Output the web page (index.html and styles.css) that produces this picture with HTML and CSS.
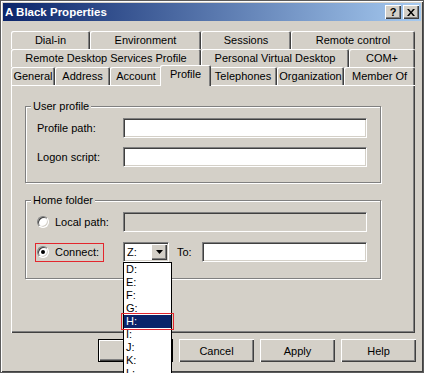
FILE: index.html
```html
<!DOCTYPE html>
<html lang="en">
<head>
    <meta charset="UTF-8">
    <title>A Black Properties</title>
    <link rel="stylesheet" href="styles.css">
</head>
<body>

    <div class="window">
        <div class="titlebar">
            <span class="title">A Black Properties</span>
            <div class="tb-buttons">
                <span class="tb-btn">?</span>
                <span class="tb-btn">
                    <svg width="8" height="7" viewBox="0 0 8 7"><path d="M0 0h2l2 2.5L6 0h2L5 3.5 8 7H6L4 4.5 2 7H0l3-3.5z"/></svg>
                </span>
            </div>
        </div>

        <div class="client">
            <!-- Tab strip, back rows first -->
            <div class="tabs">
                <div class="tab-row">
                    <div class="tab w-dialin">Dial-in</div>
                    <div class="tab w-env">Environment</div>
                    <div class="tab w-sessions">Sessions</div>
                    <div class="tab w-remote">Remote control</div>
                </div>
                <div class="tab-row">
                    <div class="tab w-rdsp">Remote Desktop Services Profile</div>
                    <div class="tab w-pvd">Personal Virtual Desktop</div>
                    <div class="tab w-com">COM+</div>
                </div>
                <div class="tab-row">
                    <div class="tab w-general">General</div>
                    <div class="tab w-address">Address</div>
                    <div class="tab w-account">Account</div>
                    <div class="tab w-profile active">Profile</div>
                    <div class="tab w-phones">Telephones</div>
                    <div class="tab w-org">Organization</div>
                    <div class="tab w-member">Member Of</div>
                </div>
            </div>

            <div class="panel">
                <div class="group">
                    <span class="group-label">User profile</span>
                    <div class="row">
                        <span class="label">Profile path:</span>
                        <div class="field"></div>
                    </div>
                    <div class="row">
                        <span class="label">Logon script:</span>
                        <div class="field"></div>
                    </div>
                </div>

                <div class="group home">
                    <span class="group-label">Home folder</span>
                    <div class="row">
                        <div class="label radio-label">
                            <span class="radio"></span>
                            <span>Local path:</span>
                        </div>
                        <div class="field disabled"></div>
                    </div>
                    <div class="row">
                        <div class="label">
                            <div class="focus-box">
                                <span class="radio checked"></span>
                                <span>Connect:</span>
                            </div>
                        </div>
                        <div class="combo">
                            <span class="combo-text">Z:</span>
                            <span class="drop-btn">
                                <svg width="7" height="4" viewBox="0 0 7 4"><path d="M0 0H7L3.5 4Z"/></svg>
                            </span>
                            <div class="drop-list">
                                <div class="opt">D:</div>
                                <div class="opt">E:</div>
                                <div class="opt">F:</div>
                                <div class="opt">G:</div>
                                <div class="opt sel">H:</div>
                                <div class="opt">I:</div>
                                <div class="opt">J:</div>
                                <div class="opt">K:</div>
                                <div class="opt">L:</div>
                            </div>
                        </div>
                        <span class="to-label">To:</span>
                        <div class="field to-field"></div>
                    </div>
                </div>
            </div>

            <div class="buttons">
                <div class="btn default">OK</div>
                <div class="btn">Cancel</div>
                <div class="btn">Apply</div>
                <div class="btn">Help</div>
            </div>
        </div>
    </div>

</body>
</html>
```

FILE: styles.css
```css
/* General */
body {
    margin: 0;
    overflow: hidden;
    font-family: "Liberation Sans", Arial, sans-serif;
    font-size: 11px;
    color: #000;
}

.window {
    width: 424px;
    height: 373px;
    box-sizing: border-box;
    border: 1px solid #5b5b5b;
    padding: 2px;
    background: #d4d0c8;
    box-shadow: inset 1px 1px #fff, inset -1px -1px #404040;
    display: flex;
    flex-direction: column;
}

/* Title bar */
.titlebar {
    height: 18px;
    padding: 0 2px;
    display: flex;
    align-items: center;
    justify-content: space-between;
    background: linear-gradient(to right, #0a246a, #a6caf0);
}

.title {
    color: #fff;
    font-weight: bold;
    font-size: 11.5px;
}

.tb-buttons {
    display: flex;
    gap: 2px;
}

.tb-btn {
    width: 16px;
    height: 14px;
    box-sizing: border-box;
    background: #d4d0c8;
    box-shadow: inset 1px 1px #fff, inset -1px -1px #404040, inset -2px -2px #808080;
    display: flex;
    align-items: center;
    justify-content: center;
    font-weight: bold;
    font-size: 11px;
}

/* Client area */
.client {
    flex: 1;
    padding: 10px 0 0 8px;
}

.tabs {
    width: 404px;
}

.tab-row {
    display: flex;
    align-items: flex-start;
    height: 18px;
}

.tab {
    height: 18px;
    box-sizing: border-box;
    padding-bottom: 1px;
    border-radius: 2px 2px 0 0;
    background: #d4d0c8;
    box-shadow: inset 1px 1px #fff, inset -1px 0 #404040, inset -2px 0 #808080;
    display: flex;
    align-items: center;
    justify-content: center;
    white-space: nowrap;
}

.tab.active {
    height: 21px;
    margin: -2px -2px 0 -2px;
    padding-bottom: 3px;
    position: relative;
    z-index: 1;
}

.w-dialin { width: 79px; }
.w-env { width: 111px; }
.w-sessions { width: 90px; }
.w-remote { width: 124px; }
.w-rdsp { width: 190px; }
.w-pvd { width: 148px; }
.w-com { width: 66px; }
.w-general { width: 44px; }
.w-address { width: 55px; }
.w-account { width: 52px; }
.w-profile { width: 51px; }
.w-phones { width: 68px; }
.w-org { width: 67px; }
.w-member { width: 71px; }

.panel {
    width: 404px;
    height: 248px;
    box-sizing: border-box;
    padding: 21px 0 0 14px;
    box-shadow: inset 1px 1px #fff, inset -1px -1px #404040, inset -2px -2px #808080;
}

/* Group boxes */
.group {
    position: relative;
    width: 356px;
    box-sizing: border-box;
    border: 1px solid #808080;
    box-shadow: inset 1px 1px #fff, 1px 1px #fff;
    padding: 11px 0 15px 11px;
    display: flex;
    flex-direction: column;
    gap: 9px;
}

.group.home {
    margin-top: 17px;
    padding-bottom: 16px;
    gap: 10px;
}

.group-label {
    position: absolute;
    top: -7px;
    left: 5px;
    padding: 0 2px;
    line-height: 13px;
    background: #d4d0c8;
}

.row {
    height: 20px;
    display: flex;
    align-items: center;
}

.label {
    width: 86px;
    flex-shrink: 0;
}

.radio-label {
    display: flex;
    align-items: center;
}

.field {
    width: 244px;
    height: 20px;
    box-sizing: border-box;
    background: #fff;
    border: 1px solid;
    border-color: #808080 #fff #fff #808080;
    box-shadow: inset 1px 1px #404040, inset -1px -1px #d4d0c8;
}

.field.disabled {
    background: #d4d0c8;
}

.radio {
    width: 12px;
    height: 12px;
    box-sizing: border-box;
    margin-right: 6px;
    border-radius: 50%;
    background: #fff;
    border: 1px solid;
    border-color: #808080 #fff #fff #808080;
    box-shadow: inset 1px 1px #404040, inset -1px -1px #d4d0c8;
    display: flex;
    align-items: center;
    justify-content: center;
}

.radio.checked::after {
    content: '';
    width: 4px;
    height: 4px;
    border-radius: 50%;
    background: #000;
}

/* red highlight round the focused control */
.focus-box {
    width: 69px;
    height: 19px;
    box-sizing: border-box;
    margin-left: -2px;
    padding-left: 1px;
    border: 1px solid #e3262d;
    display: flex;
    align-items: center;
}

/* Drive combo */
.combo {
    position: relative;
    width: 46px;
    height: 20px;
    box-sizing: border-box;
    padding: 1px;
    background: #fff;
    border: 1px solid;
    border-color: #808080 #fff #fff #808080;
    box-shadow: inset 1px 1px #404040, inset -1px -1px #d4d0c8;
    display: flex;
    align-items: center;
    justify-content: space-between;
}

.combo-text {
    margin-left: 2px;
}

.drop-btn {
    width: 16px;
    height: 16px;
    box-sizing: border-box;
    background: #d4d0c8;
    box-shadow: inset 1px 1px #fff, inset -1px -1px #404040, inset -2px -2px #808080;
    display: flex;
    align-items: center;
    justify-content: center;
}

.drop-list {
    position: absolute;
    left: -1px;
    top: 19px;
    width: 49px;
    box-sizing: border-box;
    border: 1px solid #000;
    background: #fff;
    z-index: 2;
}

.opt {
    position: relative;
    height: 13px;
    line-height: 13px;
    padding-left: 2px;
}

.opt.sel {
    background: #0a246a;
    color: #fff;
}

.opt.sel::after {
    content: '';
    position: absolute;
    left: -3px;
    right: -3px;
    top: -2px;
    bottom: -2px;
    border: 1px solid #e3262d;
}

.to-label {
    width: 25px;
    margin-left: 8px;
}

.to-field {
    width: 165px;
}

/* Dialog buttons */
.buttons {
    width: 405px;
    margin-top: 6px;
    display: flex;
    justify-content: flex-end;
    gap: 6px;
}

.btn {
    width: 75px;
    height: 23px;
    box-sizing: border-box;
    box-shadow: inset 1px 1px #fff, inset -1px -1px #404040, inset -2px -2px #808080;
    display: flex;
    align-items: center;
    justify-content: center;
}

.btn.default {
    border: 1px solid #000;
}
```
